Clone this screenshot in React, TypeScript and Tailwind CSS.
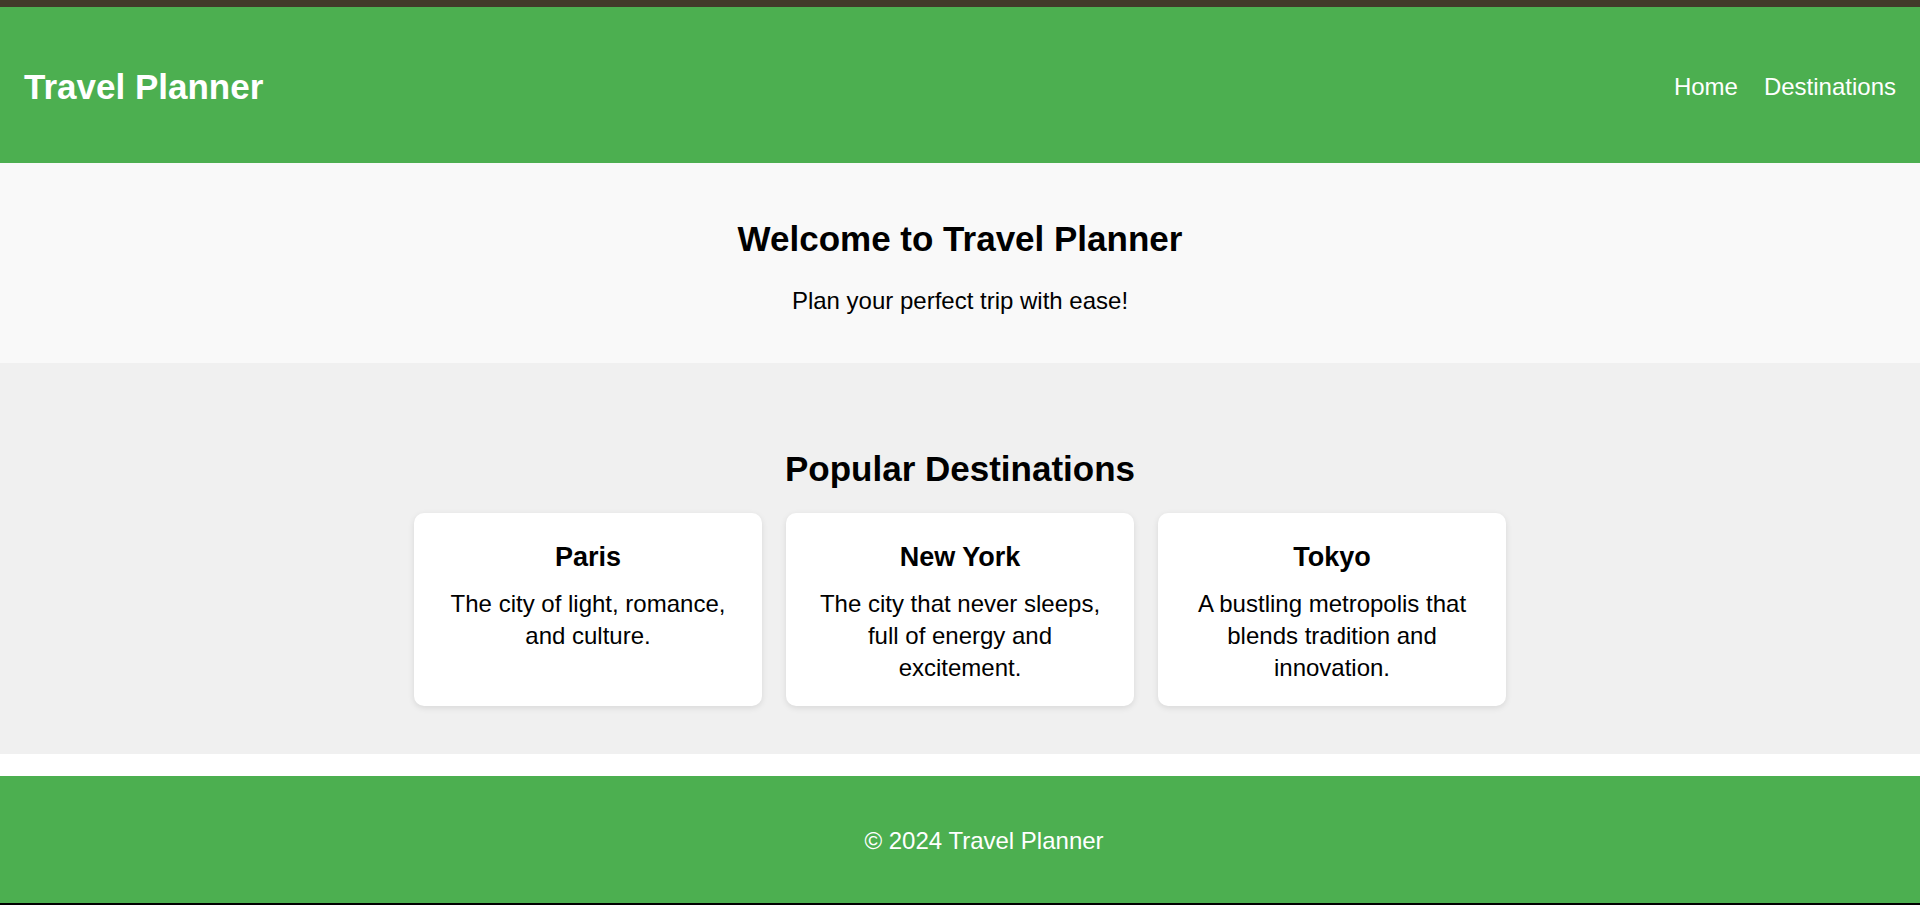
const destinations = [
  { name: "Paris", text: "The city of light, romance, and culture." },
  { name: "New York", text: "The city that never sleeps, full of energy and excitement." },
  { name: "Tokyo", text: "A bustling metropolis that blends tradition and innovation." },
];

export default function App() {
  return (
    <div className="flex min-h-screen flex-col bg-white font-['Liberation_Sans',Arial,sans-serif] text-black">
      {/* window strip */}
      <div className="h-[7px] bg-[#423a2a]"></div>

      {/* Header */}
      <header className="flex h-[156px] items-center justify-between bg-[#4caf50] px-6 pt-[3px] text-white">
        <h1 className="text-[35px] font-bold leading-none">Travel Planner</h1>
        <nav className="flex items-center gap-[26px] text-[24px] leading-none">
          <a href="#home">Home</a>
          <a href="#destinations">Destinations</a>
        </nav>
      </header>

      {/* Hero */}
      <section className="h-[200px] bg-[#f9f9f9] pt-[58px] text-center">
        <h2 className="text-[35px] font-bold leading-none">Welcome to Travel Planner</h2>
        <p className="mt-[33px] text-[24px] leading-none">Plan your perfect trip with ease!</p>
      </section>

      {/* Destinations */}
      <section className="bg-[#f0f0f0] pb-[48px] pt-[88px] text-center">
        <h2 className="text-[35px] font-bold leading-none">Popular Destinations</h2>
        <div className="mt-[27px] flex justify-center gap-6">
          {destinations.map((d) => (
            <div
              key={d.name}
              className="w-[348px] rounded-[10px] bg-white px-6 pb-[22px] pt-[31px] shadow-[0_2px_6px_rgba(0,0,0,0.1)]"
            >
              <h3 className="text-[27px] font-bold leading-none">{d.name}</h3>
              <p className="mt-[17px] text-[24px] leading-[32px]">{d.text}</p>
            </div>
          ))}
        </div>
      </section>

      <div className="h-[22px] bg-white"></div>

      {/* Footer */}
      <footer className="flex h-[127px] items-center justify-center bg-[#4caf50] pl-[48px] pt-[3px] text-[24px] leading-none text-white">
        © 2024 Travel Planner
      </footer>
      <div className="h-[2px] bg-black"></div>
    </div>
  );
}
